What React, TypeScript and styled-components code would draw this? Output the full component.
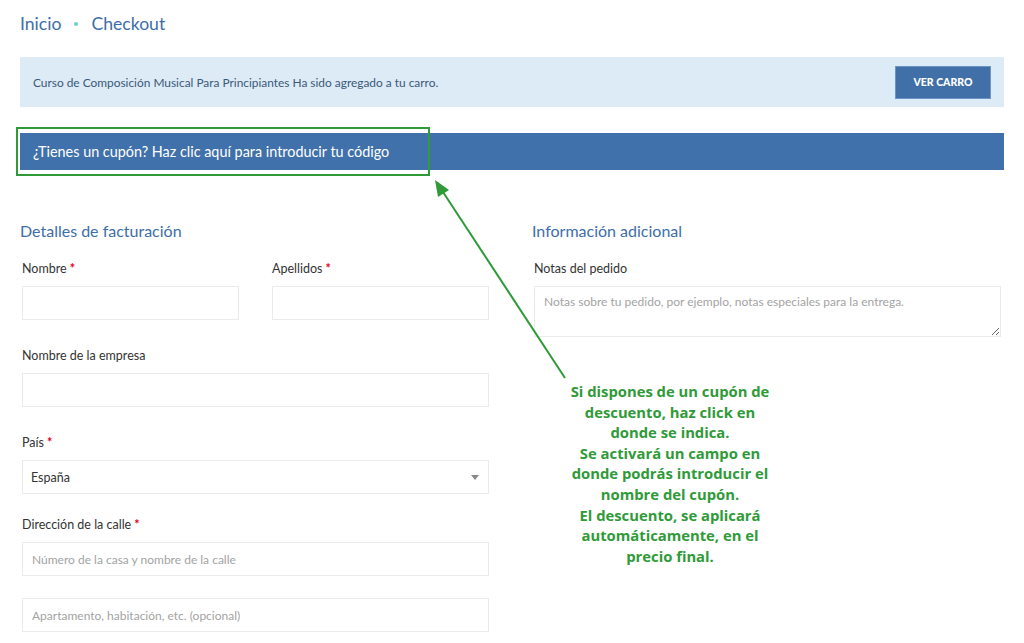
import React from "react";
import styled, { createGlobalStyle } from "styled-components";

const Global = createGlobalStyle`
  html, body { margin: 0; padding: 0; background: #fff; }
  body { font-family: Lato, "Open Sans", "Liberation Sans", sans-serif; color: #333; }
  * { box-sizing: border-box; }
`;

const Page = styled.div`
  position: relative;
  width: 1024px;
  height: 643px;
  overflow: hidden;
  padding: 0 20px;
`;

const Crumbs = styled.nav`
  display: flex;
  align-items: center;
  height: 46px;
  font-size: 17.6px;
  color: #3d6ea8;
`;

const CrumbDot = styled.span`
  width: 4px;
  height: 4px;
  border-radius: 50%;
  background: #6dd3d0;
  margin: 2px 13px 0 13px;
`;

const Notice = styled.div`
  margin-top: 11px;
  height: 50px;
  background: #dcebf6;
  display: flex;
  align-items: center;
  justify-content: space-between;
  padding: 0 13px;
  font-size: 11.9px;
  color: #3b5878;
`;

const CartButton = styled.button`
  width: 96px;
  height: 33px;
  border: 1px solid #6a95c6;
  background: #4170a9;
  color: #fff;
  font-family: inherit;
  font-weight: 900;
  font-size: 10.5px;
`;

const CouponBar = styled.div`
  margin-top: 26px;
  height: 37px;
  background: #4171aa;
  color: #fff;
  display: flex;
  align-items: center;
  padding-left: 13px;
  font-size: 14.4px;
`;

const Columns = styled.div`
  display: grid;
  grid-template-columns: 472px 472px;
  column-gap: 40px;
  margin-top: 50px;
`;

const Column = styled.section`
  display: flex;
  flex-direction: column;
`;

const Heading = styled.h3`
  margin: 0 0 18px 0;
  font-weight: 400;
  font-size: 16px;
  line-height: 22px;
  color: #3d6ea8;
`;

const Row = styled.div`
  display: grid;
  grid-template-columns: 217px 217px;
  column-gap: 33px;
  padding-left: 2px;
  margin-bottom: 27px;
`;

const Field = styled.div<{ $gap?: number }>`
  display: flex;
  flex-direction: column;
  padding: 0 3px 0 2px;
  margin-bottom: ${(p) => p.$gap ?? 27}px;
`;

const RowField = styled.div`
  display: flex;
  flex-direction: column;
`;

const Label = styled.label`
  font-size: 12.5px;
  line-height: 18px;
  height: 18px;
  margin-bottom: 8px;
  color: #333;
`;

const Req = styled.span`
  color: #e0001a;
  font-weight: 700;
  margin-left: 3px;
`;

const Input = styled.input`
  height: 34px;
  width: 100%;
  border: 1px solid #ebebeb;
  background: #fff;
  padding: 0 9px;
  font-family: inherit;
  font-size: 12px;
  color: #333;
  &::placeholder { color: #a3a3a3; }
`;

const SelectBox = styled.div`
  height: 34px;
  border: 1px solid #ebebeb;
  display: flex;
  align-items: center;
  justify-content: space-between;
  padding: 0 9px 0 8px;
  font-size: 12.5px;
  color: #333;
`;

const Caret = styled.span`
  width: 0;
  height: 0;
  border-left: 4px solid transparent;
  border-right: 4px solid transparent;
  border-top: 5px solid #888;
`;

const Notes = styled.textarea`
  height: 51px;
  width: 100%;
  border: 1px solid #ebebeb;
  padding: 7px 9px;
  font-family: inherit;
  font-size: 12px;
  line-height: 16px;
  resize: vertical;
  &::placeholder { color: #a3a3a3; }
`;

const Highlight = styled.div`
  position: absolute;
  left: 16px;
  top: 127px;
  width: 414px;
  height: 49px;
  border: 2px solid #2f9a38;
  pointer-events: none;
`;

const Pointer = styled.svg`
  position: absolute;
  left: 0;
  top: 0;
  pointer-events: none;
`;

const Callout = styled.div`
  position: absolute;
  left: 540px;
  top: 381px;
  width: 260px;
  text-align: center;
  white-space: nowrap;
  font-family: "Open Sans", Lato, sans-serif;
  font-weight: 700;
  font-size: 14.8px;
  line-height: 20.6px;
  color: #2f9a38;
`;

const calloutLines = [
  "Si dispones de un cupón de",
  "descuento, haz click en",
  "donde se indica.",
  "Se activará un campo en",
  "donde podrás introducir el",
  "nombre del cupón.",
  "El descuento, se aplicará",
  "automáticamente, en el",
  "precio final.",
];

export default function App() {
  return (
    <>
      <Global />
      <Page>
        <Crumbs>
          <span>Inicio</span>
          <CrumbDot />
          <span>Checkout</span>
        </Crumbs>

        <Notice>
          <span>Curso de Composición Musical Para Principiantes Ha sido agregado a tu carro.</span>
          <CartButton>VER CARRO</CartButton>
        </Notice>

        <CouponBar>¿Tienes un cupón? Haz clic aquí para introducir tu código</CouponBar>

        <Columns>
          <Column>
            <Heading>Detalles de facturación</Heading>
            <Row>
              <RowField>
                <Label>Nombre<Req>*</Req></Label>
                <Input />
              </RowField>
              <RowField>
                <Label>Apellidos<Req>*</Req></Label>
                <Input />
              </RowField>
            </Row>
            <Field>
              <Label>Nombre de la empresa</Label>
              <Input />
            </Field>
            <Field $gap={22}>
              <Label>País<Req>*</Req></Label>
              <SelectBox>
                <span>España</span>
                <Caret />
              </SelectBox>
            </Field>
            <Field $gap={22}>
              <Label>Dirección de la calle<Req>*</Req></Label>
              <Input placeholder="Número de la casa y nombre de la calle" />
            </Field>
            <Field>
              <Input placeholder="Apartamento, habitación, etc. (opcional)" />
            </Field>
          </Column>
          <Column>
            <Heading>Información adicional</Heading>
            <Field>
              <Label>Notas del pedido</Label>
              <Notes placeholder="Notas sobre tu pedido, por ejemplo, notas especiales para la entrega." />
            </Field>
          </Column>
        </Columns>

        <Highlight />
        <Pointer width="1024" height="643" viewBox="0 0 1024 643">
          <line x1="565" y1="378" x2="443" y2="192" stroke="#2f9a38" strokeWidth="2" />
          <polygon points="435,180 449,190 438,197" fill="#2f9a38" />
        </Pointer>
        <Callout>
          {calloutLines.map((line, i) => (
            <div key={i}>{line}</div>
          ))}
        </Callout>
      </Page>
    </>
  );
}
